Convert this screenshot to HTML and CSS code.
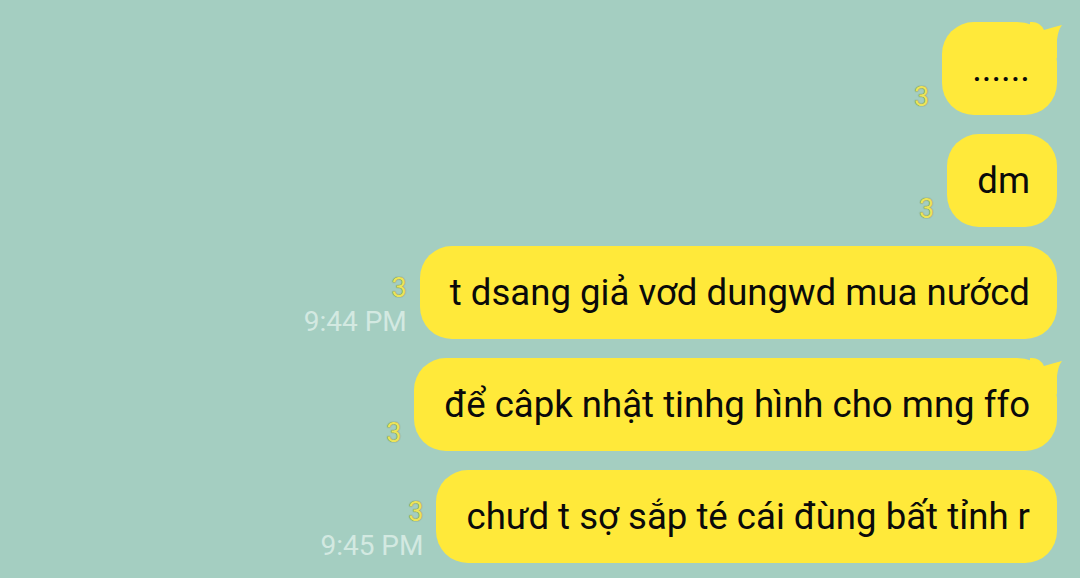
FILE: index.html
```html
<!DOCTYPE html>
<html lang="vi">
<head>
    <meta charset="UTF-8">
    <meta name="viewport" content="width=device-width, initial-scale=1.0">
    <title>Chat</title>
    <link rel="stylesheet" href="styles.css">
</head>
<body>
    <div class="chat">
        <div class="row">
            <div class="meta">
                <span class="read">3</span>
            </div>
            <div class="bubble first">
                ......
                <svg class="tail" width="34" height="36" viewBox="0 0 34 36"><path d="M0 0 L2 0 Q10 0 14 8 Q24 5 32 3 Q28 8 27 18 L27 36 L0 36 Z"/></svg>
            </div>
        </div>
        <div class="row">
            <div class="meta">
                <span class="read">3</span>
            </div>
            <div class="bubble">dm</div>
        </div>
        <div class="row">
            <div class="meta">
                <span class="read">3</span>
                <span class="time">9:44 PM</span>
            </div>
            <div class="bubble">t dsang giả vơd dungwd mua nướcd</div>
        </div>
        <div class="row">
            <div class="meta">
                <span class="read">3</span>
            </div>
            <div class="bubble first">
                để câpk nhật tinhg hình cho mng ffo
                <svg class="tail" width="34" height="36" viewBox="0 0 34 36"><path d="M0 0 L2 0 Q10 0 14 8 Q24 5 32 3 Q28 8 27 18 L27 36 L0 36 Z"/></svg>
            </div>
        </div>
        <div class="row">
            <div class="meta">
                <span class="read">3</span>
                <span class="time">9:45 PM</span>
            </div>
            <div class="bubble">chưd t sợ sắp té cái đùng bất tỉnh r</div>
        </div>
    </div>
</body>
</html>
```

FILE: styles.css
```css
body {
    margin: 0;
    font-family: Roboto, "Noto Sans", sans-serif;
    background-color: #a4cec1;
    height: 578px;
    overflow: hidden;
}
.chat {
    display: flex;
    flex-direction: column;
    align-items: flex-end;
    gap: 19px;
    padding: 22px 23px 0 0;
}
.row {
    display: flex;
    align-items: flex-end;
}
.meta {
    display: flex;
    flex-direction: column;
    align-items: flex-end;
    margin: 0 13px 1px 0;
    font-size: 27px;
    line-height: 33px;
}
.read {
    color: #ebe45a;
    text-shadow: 0 0 1px rgba(90, 95, 30, 0.7), 0 0 1px rgba(90, 95, 30, 0.5);
}
.time {
    color: #d3e9e1;
    font-size: 28px;
}
.bubble {
    position: relative;
    background-color: #ffe93a;
    color: #0a0a0a;
    font-size: 36.6px;
    line-height: 41px;
    padding: 26px 27px 26px 30px;
    border-radius: 32px;
    white-space: nowrap;
}
.bubble.first {
    border-top-right-radius: 40px;
}
.tail {
    position: absolute;
    top: 0;
    right: -7px;
}
.tail path {
    fill: #ffe93a;
}
```
